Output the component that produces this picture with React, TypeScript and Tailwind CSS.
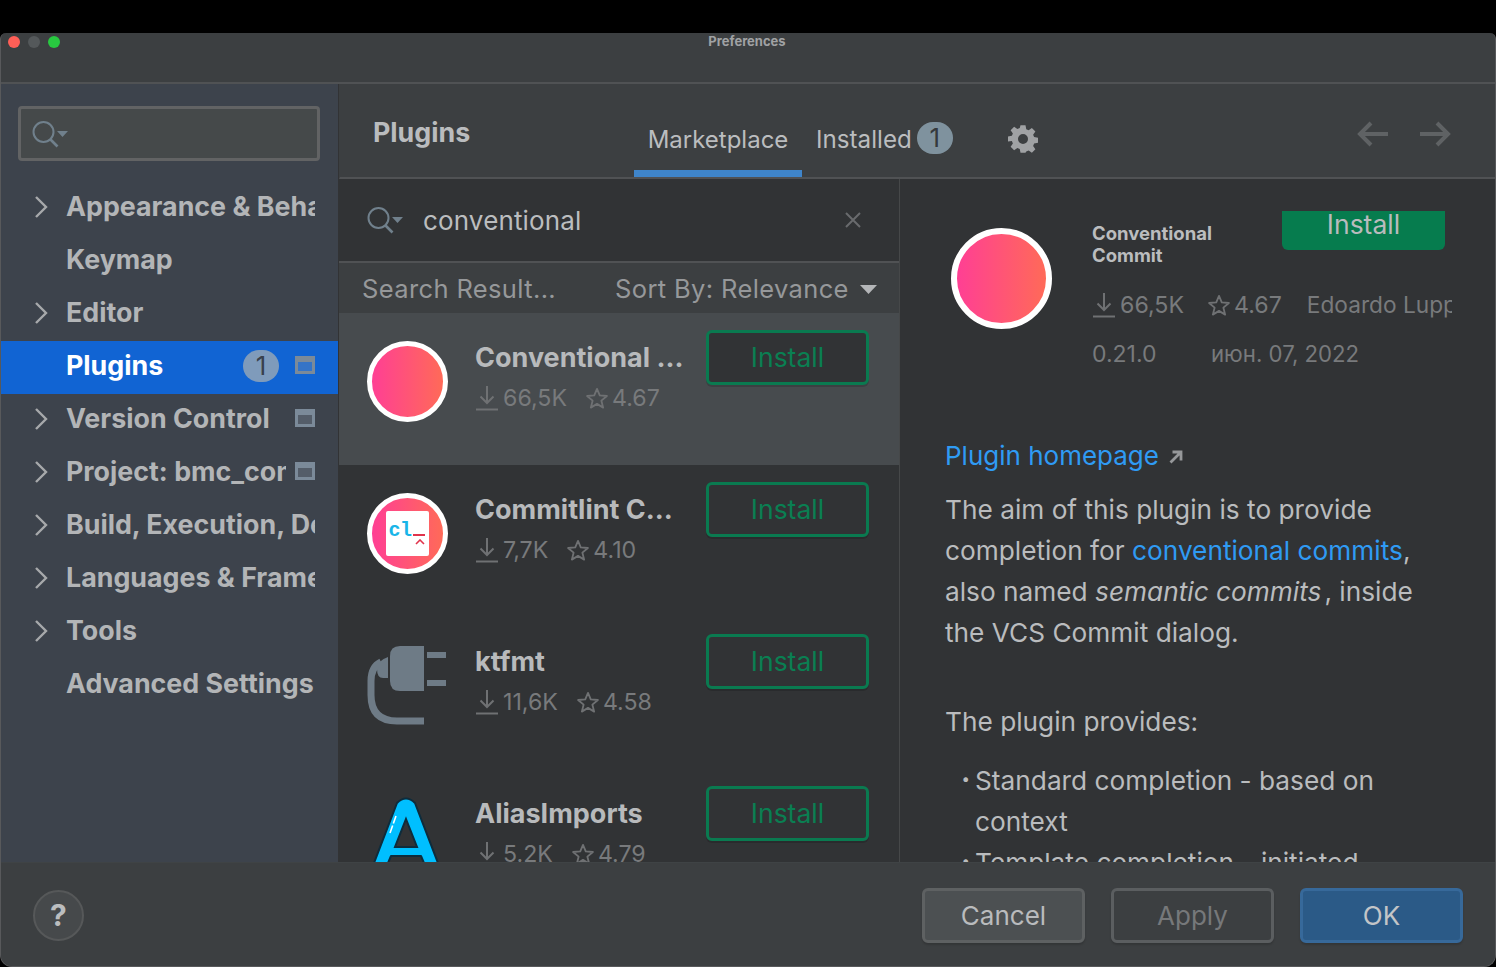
import React from "react";

const font = { fontFamily: "Inter, 'Noto Sans', sans-serif" };

function SearchIcon() {
  return (
    <svg width="36" height="28" viewBox="0 0 36 28" fill="none" className="shrink-0">
      <circle cx="11.5" cy="12" r="10" stroke="#70808c" strokeWidth="2" />
      <path d="M18.5 19.5L25.5 26.5" stroke="#70808c" strokeWidth="2.6" />
      <path d="M25 11H36L30.5 17Z" fill="#70808c" />
    </svg>
  );
}

function Chevron() {
  return (
    <svg width="14" height="24" viewBox="0 0 14 24" fill="none" className="shrink-0">
      <path d="M2 2L12 12L2 22" stroke="#a7a9ab" strokeWidth="2.4" />
    </svg>
  );
}

function ProjectMark() {
  return (
    <svg width="20" height="18" viewBox="0 0 20 18" className="shrink-0">
      <path d="M0 0H20V18H0ZM3 6V15H17V6Z" fill="#7b8a99" fillRule="evenodd" />
      <path d="M3 6H17V15H3Z" fill="#8c9cac" fillOpacity="0.3" />
    </svg>
  );
}

function Download({ w = 24 }: { w?: number }) {
  return (
    <svg width={w} height="26" viewBox="0 0 24 26" fill="none" className="shrink-0">
      <path d="M12 1V18M5.5 11.5L12 18L18.5 11.5" stroke="#6f7173" strokeWidth="2" />
      <path d="M1 24.5H23" stroke="#6f7173" strokeWidth="2" />
    </svg>
  );
}

function Star() {
  return (
    <svg width="22" height="22" viewBox="0 0 24 24" fill="none" className="shrink-0">
      <path
        d="M12 2L15 9.2L22.8 9.8L16.8 14.9L18.7 22.5L12 18.4L5.3 22.5L7.2 14.9L1.2 9.8L9 9.2Z"
        stroke="#6f7173"
        strokeWidth="2"
        strokeLinejoin="round"
      />
    </svg>
  );
}

function GradientRing({ big, children }: { big?: boolean; children?: React.ReactNode }) {
  return (
    <div
      className={
        big
          ? "w-[101px] h-[101px] shrink-0 rounded-full border-[6px] border-white bg-[linear-gradient(90deg,#ff3f94,#ff6a58)] flex items-center justify-center"
          : "w-[81px] h-[81px] shrink-0 rounded-full border-[5px] border-white bg-[linear-gradient(90deg,#ff3f94,#ff6a58)] flex items-center justify-center"
      }
    >
      {children}
    </div>
  );
}

function CommitlintIcon() {
  return (
    <GradientRing>
      <div className="w-[43px] h-[45px] rounded-[2px] bg-white relative">
        <span className="absolute left-[3px] top-[8px] text-[20px] leading-[24px] text-[#19b5e8] font-['Liberation_Mono',monospace] font-bold tracking-[-0.5px]">
          cl
        </span>
        <span className="absolute left-[27px] top-[23px] w-[12px] h-[2px] bg-[#e0344c]" />
        <svg width="10" height="6" viewBox="0 0 10 6" fill="none" className="absolute left-[29px] top-[28px]">
          <path d="M1 5L5 1L9 5" stroke="#e0344c" strokeWidth="1.6" />
        </svg>
      </div>
    </GradientRing>
  );
}

function PlugIcon() {
  return (
    <svg width="80" height="81" viewBox="0 0 80 81" className="shrink-0">
      <path d="M33 1H57V46H33Q23 46 23 36V11Q23 1 33 1Z" fill="#6e7b86" />
      <rect x="60" y="7" width="19" height="6" fill="#6e7b86" />
      <rect x="60" y="35" width="19" height="6" fill="#6e7b86" />
      <path d="M21 12V33H16Q10 33 10 24Q11 15 21 12Z" fill="#6e7b86" />
      <path d="M14 17Q4 22 4 36V50Q4 76 30 76H57" fill="none" stroke="#6e7b86" strokeWidth="7" />
    </svg>
  );
}

function AIcon() {
  return (
    <svg width="68" height="68" viewBox="0 0 68 68" className="shrink-0">
      <path
        d="M24 6Q33 -3 42 6L65 66H51L48 59H18L15 66H1Z"
        fill="#00bfff"
        stroke="#0e2c3c"
        strokeWidth="2"
        strokeLinejoin="round"
      />
      <path d="M33 22L44 50H22Z" fill="#313335" stroke="#0e2c3c" strokeWidth="2" />
      <path d="M23 19L17 36" stroke="#ffffff" strokeWidth="1.6" strokeDasharray="8 2 8" />
    </svg>
  );
}

function Stats({ dl, rate, gap = "gap-[19px]" }: { dl: string; rate: string; gap?: string }) {
  return (
    <div className={`flex items-center ${gap} text-[23.2px] leading-[28px] text-[#787a7c]`}>
      <span className="flex items-center gap-[4px]">
        <Download />
        {dl}
      </span>
      <span className="flex items-center gap-[4px]">
        <Star />
        {rate}
      </span>
    </div>
  );
}

function PluginRow({
  icon,
  name,
  dl,
  rate,
  selected,
}: {
  icon: React.ReactNode;
  name: string;
  dl: string;
  rate: string;
  selected?: boolean;
}) {
  return (
    <div className={`h-[152px] shrink-0 flex items-start pl-[28px] pr-[29px] ${selected ? "bg-[#474b4e]" : ""}`}>
      <div className="w-[80px] h-[152px] pt-[28px] shrink-0 flex justify-center items-start">{icon}</div>
      <div className="ml-[28px] w-[231px] shrink-0 pt-[28px]">
        <div className="text-[27px] leading-[34px] font-bold text-[#b8babc] whitespace-nowrap">{name}</div>
        <div className="mt-[9px]">
          <Stats dl={dl} rate={rate} />
        </div>
      </div>
      <button
        className={`mt-[17px] shrink-0 w-[163px] h-[55px] rounded-[6px] border-[3px] border-[#0a7a50] text-[#0a7f52] text-[26.5px] shadow-[0_2px_0_rgba(0,0,0,0.15)] ${
          selected ? "bg-[#313335]" : ""
        }`}
      >
        Install
      </button>
    </div>
  );
}

function NavRow({
  label,
  chevron,
  active,
  badge,
  mark,
  clip = "w-[249px]",
}: {
  label: string;
  chevron?: boolean;
  active?: boolean;
  badge?: boolean;
  mark?: boolean;
  clip?: string;
}) {
  return (
    <div
      className={`h-[53px] flex items-center pl-[33px] pr-[22px] pb-[4px] ${
        active ? "bg-[#1164d3] text-white" : "text-[#b3b5b7]"
      }`}
    >
      <div className="w-[32px] shrink-0">{chevron && <Chevron />}</div>
      <div className={`${clip} overflow-hidden whitespace-nowrap text-[26.8px] font-bold shrink-0`}>{label}</div>
      {badge && (
        <div className="ml-[-72px] w-[36px] h-[32px] rounded-full bg-[#7f9bbb] text-[#38414c] text-[26px] flex items-center justify-center shrink-0 relative">
          1
        </div>
      )}
      {mark && (
        <div
          className={`${
            clip === "w-[220px]" ? "ml-[9px]" : badge ? "ml-[16px]" : "ml-[-20px]"
          } shrink-0 relative -translate-y-[1px]`}
        >
          <ProjectMark />
        </div>
      )}
    </div>
  );
}

function FooterButton({ label, tone }: { label: string; tone: "cancel" | "apply" | "ok" }) {
  const cls = {
    cancel: "bg-[#4c5052] border-[#5e6162] text-[#b9bbbd]",
    apply: "border-[#5b5e60] text-[#76787a]",
    ok: "bg-[#2b5a87] border-[#37699a] text-[#c3c5c7]",
  }[tone];
  return (
    <button className={`w-[163px] h-[55px] rounded-[6px] border-[3px] text-[26px] shadow-[0_2px_2px_rgba(0,0,0,0.15)] ${cls}`}>
      {label}
    </button>
  );
}

export default function App() {
  return (
    <div className="w-[1496px] h-[967px] bg-black pt-[33px] overflow-hidden" style={font}>
      <div className="h-[934px] flex flex-col overflow-hidden rounded-t-[6px] rounded-b-[12px] bg-[#3c3f41] border-x border-b border-[#58595b]">
        {/* title bar */}
        <div className="relative h-[51px] shrink-0 flex justify-center border-b-2 border-[#505254]">
          <div className="absolute left-[7px] top-[3px] flex gap-[8px]">
            <span className="w-[12px] h-[12px] rounded-full bg-[#ff5f57]" />
            <span className="w-[12px] h-[12px] rounded-full bg-[#54585a]" />
            <span className="w-[12px] h-[12px] rounded-full bg-[#28c840]" />
          </div>
          <span className="text-[13px] leading-[17px] font-bold text-[#a0a2a4] -translate-x-[1px]">Preferences</span>
        </div>

        <div className="flex-1 min-h-0 flex">
          {/* sidebar */}
          <aside className="w-[338px] shrink-0 bg-[#3d434c] border-r border-[#323335] flex flex-col">
            <div className="mt-[22px] ml-[17px] w-[302px] h-[55px] shrink-0 rounded-[4px] border-[3px] border-[#626364] bg-[#45494a] flex items-center pl-[11px]">
              <SearchIcon />
            </div>
            <nav className="mt-[21px] flex flex-col">
              <NavRow label="Appearance & Behavior" chevron />
              <NavRow label="Keymap" />
              <NavRow label="Editor" chevron />
              <NavRow label="Plugins" active badge mark />
              <NavRow label="Version Control" chevron mark />
              <NavRow label="Project: bmc_commits" chevron mark clip="w-[220px]" />
              <NavRow label="Build, Execution, Deployment" chevron />
              <NavRow label="Languages & Frameworks" chevron />
              <NavRow label="Tools" chevron />
              <NavRow label="Advanced Settings" />
            </nav>
          </aside>

          {/* main */}
          <main className="flex-1 min-w-0 flex flex-col">
            <header className="h-[95px] shrink-0 flex border-b-2 border-[#505254] pl-[33px] pr-[44px] border-l border-l-[#3c3f41]">
              <div className="w-[261px] shrink-0 pt-[29px] text-[26.8px] leading-[38px] font-bold text-[#babcbe]">Plugins</div>
              <div className="w-[168px] h-[93px] shrink-0 flex justify-center pt-[39px] text-[24px] leading-[34px] text-[#bbbdbf] border-b-[7px] border-[#3f85ca]">
                Marketplace
              </div>
              <div className="ml-[14px] flex items-start pt-[39px] text-[24.2px] leading-[34px] text-[#bbbdbf] shrink-0">
                Installed
                <span className="ml-[5px] -mt-[1px] w-[36px] h-[32px] rounded-full bg-[#7f929e] text-[#35393c] text-[26px] leading-[32px] text-center">
                  1
                </span>
              </div>
              <svg width="30" height="30" viewBox="0 0 24 24" className="ml-[55px] mt-[40px] shrink-0">
                <path
                  fill="#a0a2a4"
                  fillRule="evenodd"
                  d="M10 1h4l.6 3.1 1.9.8 2.6-1.8 2.8 2.8-1.8 2.6.8 1.9 3.1.6v4l-3.1.6-.8 1.9 1.8 2.6-2.8 2.8-2.6-1.8-1.9.8L14 23h-4l-.6-3.1-1.9-.8-2.6 1.8-2.8-2.8 1.8-2.6-.8-1.9L0 14v-4l3.1-.6.8-1.9L2.1 4.9l2.8-2.8 2.6 1.8 1.9-.8zM12 8a4 4 0 1 0 0 8 4 4 0 0 0 0-8z"
                />
              </svg>
              <div className="ml-auto flex items-start gap-[32px] pt-[37px]">
                <svg width="31" height="26" viewBox="0 0 31 26" fill="none">
                  <path d="M31 13H3M14 2L3 13L14 24" stroke="#5f6264" strokeWidth="4" />
                </svg>
                <svg width="31" height="26" viewBox="0 0 31 26" fill="none">
                  <path d="M0 13H28M17 2L28 13L17 24" stroke="#5f6264" strokeWidth="4" />
                </svg>
              </div>
            </header>

            <div className="flex-1 min-h-0 flex">
              {/* list column */}
              <section className="w-[561px] shrink-0 flex flex-col border-r border-[#464849] overflow-hidden">
                <div className="h-[84px] shrink-0 bg-[#313335] border-b-2 border-[#505254] flex items-center pl-[28px] pr-[38px]">
                  <SearchIcon />
                  <span className="ml-[20px] text-[26px] tracking-[0.15px] text-[#bbbdbf]">conventional</span>
                  <svg width="16" height="16" viewBox="0 0 16 16" fill="none" className="ml-auto">
                    <path d="M1 1L15 15M15 1L1 15" stroke="#696b6d" strokeWidth="2" />
                  </svg>
                </div>
                <div className="h-[50px] shrink-0 flex items-center pl-[23px] pt-[2px] text-[25.5px] tracking-[0.37px] text-[#96989a] whitespace-nowrap">
                  <span className="w-[253px] shrink-0">Search Result...</span>
                  <span>Sort By: Relevance</span>
                  <svg width="17" height="9" viewBox="0 0 17 9" className="ml-[11px]">
                    <path d="M0 0H17L8.5 9Z" fill="#b4b6b8" />
                  </svg>
                </div>
                <div className="flex-1 min-h-0 bg-[#313335] overflow-hidden">
                  <PluginRow selected icon={<GradientRing />} name="Conventional ..." dl="66,5K" rate="4.67" />
                  <PluginRow icon={<CommitlintIcon />} name="Commitlint C..." dl="7,7K" rate="4.10" />
                  <PluginRow icon={<PlugIcon />} name="ktfmt" dl="11,6K" rate="4.58" />
                  <PluginRow icon={<AIcon />} name="AliasImports" dl="5.2K" rate="4.79" />
                </div>
              </section>

              {/* detail column */}
              <section className="flex-1 min-w-0 bg-[#313335] overflow-hidden pl-[45px] pr-[30px] text-[#babcbe] text-[26.25px] leading-[41px]">
                <div className="flex h-[255px] shrink-0">
                  <div className="pt-[49px] pl-[6px] shrink-0">
                    <GradientRing big />
                  </div>
                  <div className="ml-[40px] w-[404px] shrink-0 pt-[32px] relative">
                    <div className="flex justify-between">
                      <div className="w-[130px] pt-[11px] text-[18.5px] leading-[22px] font-bold text-[#bbbdbf]">
                        Conventional Commit
                      </div>
                      <button className="w-[163px] h-[39px] mr-[51px] rounded-b-[6px] bg-[#067c4e] text-[26.5px] leading-[26px] text-[#b9bbbd] pb-[14px]">
                        Install
                      </button>
                    </div>
                    <div className="mt-[25px] flex items-center text-[23.2px] leading-[28px] text-[#787a7c] whitespace-nowrap overflow-hidden w-[360px]">
                      <Stats dl="66,5K" rate="4.67" gap="gap-[24px]" />
                      <span className="ml-[25px] text-[22.7px]">Edoardo Luppi</span>
                    </div>
                    <div className="mt-[21px] flex text-[23px] leading-[28px] text-[#787a7c]">
                      <span className="w-[119px]">0.21.0</span>
                      <span className="text-[22.2px]">июн. 07, 2022</span>
                    </div>
                  </div>
                </div>
                <div className="mt-[1px] h-[41px] flex items-center text-[26px] text-[#2f9bf4]">
                  Plugin homepage
                  <svg width="14" height="14" viewBox="0 0 14 14" fill="none" className="ml-[10px] mt-[2px]">
                    <path d="M1.5 12.5L11 3M3.5 2H12V10.5" stroke="#96989a" strokeWidth="2.8" />
                  </svg>
                </div>
                <p className="w-[500px] mt-[13px]">
                  The aim of this plugin is to provide completion for{" "}
                  <span className="text-[#2f9bf4]">conventional commits</span>, also named{" "}
                  <em>semantic commits</em>
                  <span className="ml-[3px]">,</span> inside the VCS Commit dialog.
                </p>
                <p className="mt-[48px]">The plugin provides:</p>
                <ul className="mt-[17px] w-[470px] pt-[1px]">
                  <li className="flex">
                    <span className="w-[30px] shrink-0 text-right pr-[5px] text-[15px] -translate-y-[2px]">•</span>
                    <span>Standard completion - based on context</span>
                  </li>
                  <li className="flex">
                    <span className="w-[30px] shrink-0 text-right pr-[5px] text-[15px] -translate-y-[2px]">•</span>
                    <span>Template completion - initiated</span>
                  </li>
                </ul>
              </section>
            </div>
          </main>
        </div>

        {/* footer */}
        <footer className="h-[104px] shrink-0 flex items-start pt-[25px] pl-[32px] pr-[32px] border-t border-[#3f4345] relative z-10 bg-[#3c3f41]">
          <div className="w-[51px] h-[51px] rounded-full bg-[#46494b] border-2 border-[#565859] text-[#bbbdbf] text-[30px] leading-[47px] text-center font-bold mt-[2px]">
            ?
          </div>
          <div className="ml-auto flex gap-[26px]">
            <FooterButton label="Cancel" tone="cancel" />
            <FooterButton label="Apply" tone="apply" />
            <FooterButton label="OK" tone="ok" />
          </div>
        </footer>
      </div>
    </div>
  );
}
